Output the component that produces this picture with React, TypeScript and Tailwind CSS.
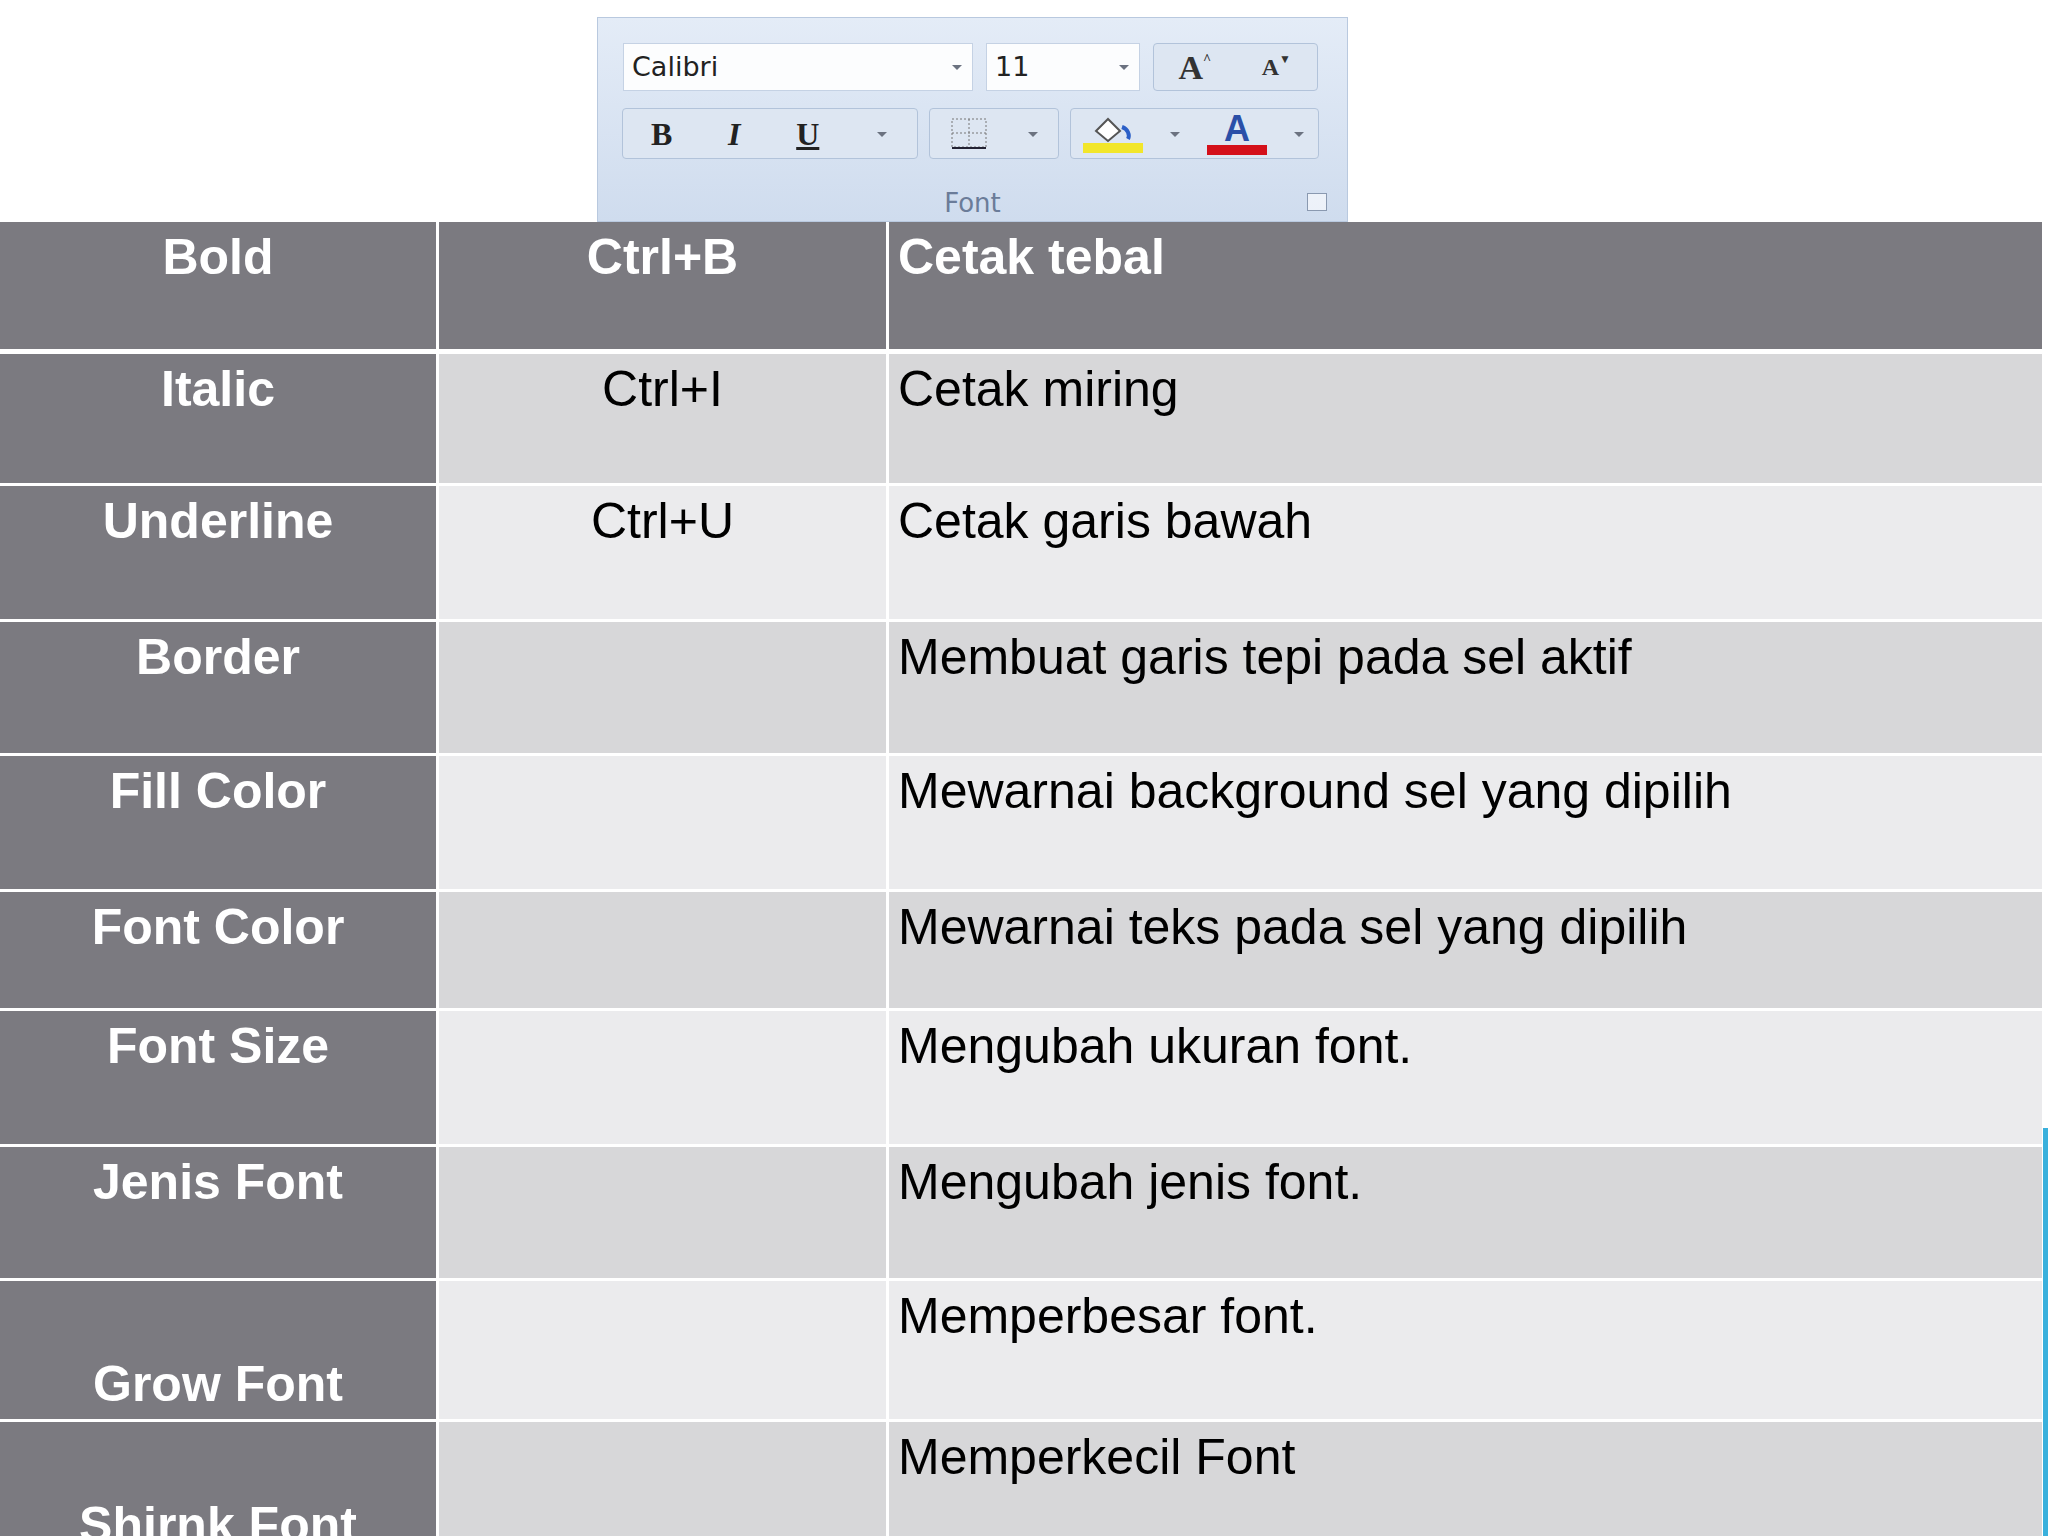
const rows = [
  { a: "Italic", b: "Ctrl+I", c: "Cetak miring", h: 132, bg: "bg-[#d7d7d9]" },
  { a: "Underline", b: "Ctrl+U", c: "Cetak garis bawah", h: 136, bg: "bg-[#ebebed]" },
  { a: "Border", b: "", c: "Membuat garis tepi pada sel aktif", h: 134, bg: "bg-[#d7d7d9]" },
  { a: "Fill Color", b: "", c: "Mewarnai background sel yang dipilih", h: 136, bg: "bg-[#ebebed]" },
  { a: "Font Color", b: "", c: "Mewarnai teks pada sel yang dipilih", h: 119, bg: "bg-[#d7d7d9]" },
  { a: "Font Size", b: "", c: "Mengubah ukuran font.", h: 136, bg: "bg-[#ebebed]" },
  { a: "Jenis Font", b: "", c: "Mengubah jenis font.", h: 134, bg: "bg-[#d7d7d9]" },
  { a: "Grow Font", b: "", c: "Memperbesar font.", h: 141, bg: "bg-[#ebebed]", bottom: true },
  { a: "Shirnk Font", b: "", c: "Memperkecil Font", h: 141, bg: "bg-[#d7d7d9]", bottom: true },
];

function Caret() {
  return <svg width="14" height="8" viewBox="0 0 14 8"><path d="M2 2h10L7 7z" fill="#6b7280" /></svg>;
}

function Toolbar() {
  return (
    <div className="ml-[597px] w-[751px] h-[205px] mt-[17px] bg-gradient-to-b from-[#e4ecf7] to-[#cfdcee] border border-[#b9c9df] flex flex-col" style={{ fontFamily: "'DejaVu Sans', sans-serif" }}>
      <div className="flex items-center gap-[13px] ml-[25px] mt-[25px] h-[48px]">
        <div className="w-[350px] h-[48px] bg-white/90 border border-[#c5d2e4] flex items-center justify-between px-2">
          <span className="text-[27px] text-[#222]">Calibri</span><Caret />
        </div>
        <div className="w-[154px] h-[48px] bg-white/90 border border-[#c5d2e4] flex items-center justify-between px-2">
          <span className="text-[27px] text-[#222]">11</span><Caret />
        </div>
        <div className="w-[165px] h-[48px] border border-[#b2c3da] rounded bg-[#dde6f2] flex">
          <div className="flex-1 flex items-center justify-center text-[34px] font-bold text-[#333]" style={{ fontFamily: "'Liberation Serif', serif" }}>A<sup className="text-[14px]">^</sup></div>
          <div className="flex-1 flex items-center justify-center text-[24px] font-bold text-[#333]" style={{ fontFamily: "'Liberation Serif', serif" }}>A<span className="text-[12px] -mt-4">▼</span></div>
        </div>
      </div>
      <div className="flex items-center gap-[11px] ml-[24px] mt-[17px] h-[51px]">
        <div className="w-[296px] h-[51px] border border-[#b2c3da] rounded bg-[#dde6f2] flex items-center justify-around text-[32px] text-[#222]" style={{ fontFamily: "'Liberation Serif', serif" }}>
          <b>B</b><i className="font-bold">I</i><span className="underline font-bold">U</span><Caret />
        </div>
        <div className="w-[130px] h-[51px] border border-[#b2c3da] rounded bg-[#dde6f2] flex items-center justify-around">
          <svg width="40" height="36" viewBox="0 0 40 36"><rect x="3" y="3" width="34" height="28" fill="none" stroke="#777" strokeDasharray="2 2" /><path d="M20 3v28M3 17h34" stroke="#777" strokeDasharray="2 2" /><path d="M3 32h34" stroke="#223" strokeWidth="2" /></svg>
          <Caret />
        </div>
        <div className="w-[249px] h-[51px] border border-[#b2c3da] rounded bg-[#dde6f2] flex items-center justify-around">
          <div className="flex flex-col items-center">
            <svg width="54" height="28" viewBox="0 0 54 28"><path d="M10 16l12-12 12 12-12 10z" fill="#fff" stroke="#555" strokeWidth="2" /><path d="M36 12c6 2 8 8 6 12" stroke="#2b5fc7" strokeWidth="4" fill="none" /></svg>
            <div className="w-[60px] h-[10px] bg-[#f2e62a]" />
          </div>
          <Caret />
          <div className="flex flex-col items-center">
            <span className="text-[36px] font-bold text-[#2a4fa8] leading-[32px]" style={{ fontFamily: "'Liberation Sans', sans-serif" }}>A</span>
            <div className="w-[60px] h-[10px] bg-[#d4101a]" />
          </div>
          <Caret />
        </div>
      </div>
      <div className="relative mt-auto h-[36px] flex items-center justify-center text-[26px] text-[#6b7c99]">
        Font
        <span className="absolute right-[20px] top-[8px] w-[20px] h-[18px] border border-[#8a99b0] bg-white/60" />
      </div>
    </div>
  );
}

export default function App() {
  const font = { fontFamily: "'Liberation Sans', Arial, sans-serif" };
  return (
    <div className="w-[2048px] h-[1536px] bg-white overflow-hidden relative" style={font}>
      <Toolbar />
      <div className="w-[2042px] flex flex-col text-[50px] leading-[58px]">
        <div className="flex h-[132px] border-b-[5px] border-white gap-[3px]">
          <div className="w-[436px] bg-[#7b7a80] text-white font-bold text-center pt-[6px]">Bold</div>
          <div className="w-[447px] bg-[#7b7a80] text-white font-bold text-center pt-[6px]">Ctrl+B</div>
          <div className="flex-1 bg-[#7b7a80] text-white font-bold pl-[9px] pt-[6px]">Cetak tebal</div>
        </div>
        {rows.map((r) => (
          <div key={r.a} className="flex border-b-[3px] border-white gap-[3px] shrink-0" style={{ height: r.h }}>
            <div className={`w-[436px] bg-[#7b7a80] text-white font-bold text-center flex flex-col ${r.bottom ? "justify-end pb-[6px]" : "pt-[6px]"}`}>{r.a}</div>
            <div className={`w-[447px] ${r.bg} text-black text-center pt-[6px]`}>{r.b}</div>
            <div className={`flex-1 ${r.bg} text-black pl-[9px] pt-[6px]`}>{r.c}</div>
          </div>
        ))}
      </div>
      <div className="absolute right-0 top-[1128px] w-[5px] h-[408px] bg-[#3ab0dc]" />
    </div>
  );
}
